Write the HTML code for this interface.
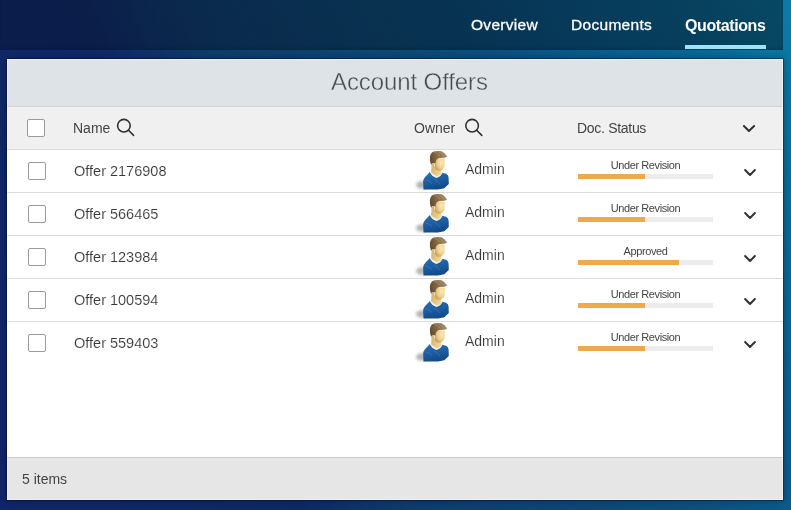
<!DOCTYPE html>
<html><head><meta charset="utf-8">
<style>
*{margin:0;padding:0;box-sizing:border-box}
html,body{width:791px;height:510px;overflow:hidden}
body{position:relative;font-family:"Liberation Sans",sans-serif;
background:linear-gradient(66deg,#10266a 0%,#0f2a68 30%,#0e3c6e 40%,#0c4a78 60%,#0b5282 70%,#0a5e90 80%,#0a6a98 90%,#0a7ca8 100%);}
.hdr{position:absolute;left:0;top:0;width:783px;height:50px;background:linear-gradient(to right,rgba(0,0,0,0.28),rgba(0,4,8,0.42));box-shadow:inset 0 -3px 3px -1px rgba(0,0,0,0.12)}
.nav{position:absolute;top:14.5px;font-size:15.5px;color:#fff;line-height:20px;white-space:nowrap;-webkit-text-stroke:0.3px #fff;letter-spacing:0.3px}
.ul{position:absolute;left:685px;top:45px;width:81px;height:4px;background:#9ee2f5}
.panel{position:absolute;left:7px;top:59px;width:776px;height:441px;background:#fff;box-shadow:0 0 0 1px rgba(0,0,30,0.33),0 0 7px 1px rgba(0,0,10,0.3);overflow:hidden}
.title{position:absolute;left:0;top:0;width:776px;height:48px;background:#dde3e6;border-bottom:1px solid #d4d4d4}
.title span{position:absolute;left:324px;top:9px;font-size:24px;color:#4a4a4a;line-height:28px;white-space:nowrap;letter-spacing:-0.1px;-webkit-text-stroke:0.4px #dde3e6}
.colh{position:absolute;left:0;top:48px;width:776px;height:43px;background:#f0f0f0;border-bottom:1px solid #dcdcdc}
.t{position:absolute;font-size:14px;color:#444;line-height:16px;white-space:nowrap}
.cb{position:absolute;width:18px;height:18px;border:1.3px solid #9a9a9a;border-radius:2px;background:#fff}
.row{position:absolute;left:0;width:776px;height:43px;border-bottom:1px solid #dcdcdc}
.bar{position:absolute;left:571px;width:135px;height:5px;background:#ececec}
.bar i{position:absolute;left:0;top:0;height:5px;background:#eda94b}
.st{position:absolute;left:571px;width:135px;text-align:center;font-size:11px;color:#444;line-height:12px;letter-spacing:-0.4px;white-space:nowrap}
.foot{position:absolute;left:0;top:398px;width:776px;height:43px;background:#e6e6e6;border-top:1px solid #c9c9c9}
svg{position:absolute;overflow:visible}
.t,.st,.nav,.title span{will-change:transform}
</style></head><body>
<div class="hdr"></div>
<div class="nav" style="left:471px">Overview</div>
<div class="nav" style="left:571px">Documents</div>
<div class="nav" style="left:685px;top:15.5px;font-size:16px;font-weight:bold;letter-spacing:-0.4px;-webkit-text-stroke:0">Quotations</div>
<div class="ul"></div>

<div class="panel">
  <div class="title"><span>Account Offers</span></div>
  <div class="colh">
    <div class="cb" style="left:20px;top:12px;border-width:1.5px"></div>
    <div class="t" style="left:66px;top:12.5px">Name</div>
    <div class="t" style="left:407px;top:12.5px">Owner</div>
    <div class="t" style="left:570px;top:12.5px;letter-spacing:-0.3px">Doc. Status</div>
  </div>
  <svg width="776" height="441" style="left:0;top:0">
    <g fill="none" stroke="#2f2f2f" stroke-width="1.55">
      <circle cx="116.9" cy="66.7" r="6.3"/><path d="M121.5 71.3 L126.6 76.4" stroke-linecap="round"/>
      <circle cx="465.1" cy="66.7" r="6.3"/><path d="M469.7 71.3 L474.8 76.4" stroke-linecap="round"/>
      <path d="M736.9 67 L742 72 L747.1 67" stroke-width="2" stroke-linecap="round" stroke-linejoin="round"/>
    </g>
  </svg>
  <div class="row" style="top:91px">
    <div class="cb" style="left:21px;top:12px"></div>
    <div class="t" style="left:66.6px;top:12.8px;font-size:14.5px;-webkit-text-stroke:0.12px #fff;color:#383838">Offer 2176908</div>
    <svg class="av" width="38" height="42" viewBox="0 0 38 42" style="left:407px;top:0"><ellipse cx="8" cy="35" rx="6" ry="3.8" fill="#777" opacity="0.55" filter="url(#bl)"/>
      <path d="M17.7 15 L26.7 19.7 L28 23.5 L23.1 27 L17 22.6Z" fill="url(#neck)"/>
      <path d="M15.9 21.9 Q18.5 26.5 22.6 27.8 Q26.5 26.5 28 22.8 L32.1 23.7 Q34.4 25 34.6 27.5 L34.8 34.1 L30.3 38.2 L24 39.6 L9.5 39.6 L9.1 31.4 Q9.8 28.3 11.6 26.6Z" fill="url(#shirt)"/>
      <path d="M16.4 21.8 Q18.5 26.6 22.6 27.1 Q26.6 26.4 28 22.6" fill="none" stroke="#f3efe2" stroke-width="1.1"/>
      <path d="M21 18.3 Q22.5 20.8 25 20.8 Q28.8 20.5 30.5 16.5 L30.8 8.8 L23.1 7.9 Q20.3 12 21 18.3Z" fill="url(#face)"/>
      <path d="M17 14.8 L16 11 L15.9 7 Q16.5 3 19.8 1.6 Q23.5 0.5 27.5 1.3 Q30.5 2.6 33.2 6.4 L30.6 7.8 L25 8.1 Q22.6 8.8 22 10.5 L21.4 13.4 L19.4 13.2Z" fill="url(#hair)"/><path d="M20 2.2 Q24 3.5 26 6 M23.5 1.4 Q28 3 29.5 6" fill="none" stroke="#b9a27c" stroke-width="0.7" opacity="0.7"/><ellipse cx="19" cy="15.3" rx="1.5" ry="2.2" fill="#e6c483"/><path d="M19.5 13.6 Q18.6 15.2 19.6 17" fill="none" stroke="#b88f55" stroke-width="0.6"/><path d="M11 29.5 Q15 30.5 18 33.5 M20 29 Q24 31 26 34" fill="none" stroke="#5d94c8" stroke-width="0.6" opacity="0.6"/></svg>
    <div class="t" style="left:458px;top:11px;-webkit-text-stroke:0.12px #fff;color:#383838">Admin</div>
    <div class="st" style="top:9px">Under Revision</div>
    <div class="bar" style="top:24px"><i style="width:67px"></i></div>
    <svg width="20" height="20" style="left:0;top:0"><path d="M738.1 20 L743 25 L747.9 20" fill="none" stroke="#333" stroke-width="2" stroke-linecap="round" stroke-linejoin="round"/></svg>
  </div>
  <div class="row" style="top:134px">
    <div class="cb" style="left:21px;top:12px"></div>
    <div class="t" style="left:66.6px;top:12.8px;font-size:14.5px;-webkit-text-stroke:0.12px #fff;color:#383838">Offer 566465</div>
    <svg class="av" width="38" height="42" viewBox="0 0 38 42" style="left:407px;top:0"><ellipse cx="8" cy="35" rx="6" ry="3.8" fill="#777" opacity="0.55" filter="url(#bl)"/>
      <path d="M17.7 15 L26.7 19.7 L28 23.5 L23.1 27 L17 22.6Z" fill="url(#neck)"/>
      <path d="M15.9 21.9 Q18.5 26.5 22.6 27.8 Q26.5 26.5 28 22.8 L32.1 23.7 Q34.4 25 34.6 27.5 L34.8 34.1 L30.3 38.2 L24 39.6 L9.5 39.6 L9.1 31.4 Q9.8 28.3 11.6 26.6Z" fill="url(#shirt)"/>
      <path d="M16.4 21.8 Q18.5 26.6 22.6 27.1 Q26.6 26.4 28 22.6" fill="none" stroke="#f3efe2" stroke-width="1.1"/>
      <path d="M21 18.3 Q22.5 20.8 25 20.8 Q28.8 20.5 30.5 16.5 L30.8 8.8 L23.1 7.9 Q20.3 12 21 18.3Z" fill="url(#face)"/>
      <path d="M17 14.8 L16 11 L15.9 7 Q16.5 3 19.8 1.6 Q23.5 0.5 27.5 1.3 Q30.5 2.6 33.2 6.4 L30.6 7.8 L25 8.1 Q22.6 8.8 22 10.5 L21.4 13.4 L19.4 13.2Z" fill="url(#hair)"/><path d="M20 2.2 Q24 3.5 26 6 M23.5 1.4 Q28 3 29.5 6" fill="none" stroke="#b9a27c" stroke-width="0.7" opacity="0.7"/><ellipse cx="19" cy="15.3" rx="1.5" ry="2.2" fill="#e6c483"/><path d="M19.5 13.6 Q18.6 15.2 19.6 17" fill="none" stroke="#b88f55" stroke-width="0.6"/><path d="M11 29.5 Q15 30.5 18 33.5 M20 29 Q24 31 26 34" fill="none" stroke="#5d94c8" stroke-width="0.6" opacity="0.6"/></svg>
    <div class="t" style="left:458px;top:11px;-webkit-text-stroke:0.12px #fff;color:#383838">Admin</div>
    <div class="st" style="top:9px">Under Revision</div>
    <div class="bar" style="top:24px"><i style="width:67px"></i></div>
    <svg width="20" height="20" style="left:0;top:0"><path d="M738.1 20 L743 25 L747.9 20" fill="none" stroke="#333" stroke-width="2" stroke-linecap="round" stroke-linejoin="round"/></svg>
  </div>
  <div class="row" style="top:177px">
    <div class="cb" style="left:21px;top:12px"></div>
    <div class="t" style="left:66.6px;top:12.8px;font-size:14.5px;-webkit-text-stroke:0.12px #fff;color:#383838">Offer 123984</div>
    <svg class="av" width="38" height="42" viewBox="0 0 38 42" style="left:407px;top:0"><ellipse cx="8" cy="35" rx="6" ry="3.8" fill="#777" opacity="0.55" filter="url(#bl)"/>
      <path d="M17.7 15 L26.7 19.7 L28 23.5 L23.1 27 L17 22.6Z" fill="url(#neck)"/>
      <path d="M15.9 21.9 Q18.5 26.5 22.6 27.8 Q26.5 26.5 28 22.8 L32.1 23.7 Q34.4 25 34.6 27.5 L34.8 34.1 L30.3 38.2 L24 39.6 L9.5 39.6 L9.1 31.4 Q9.8 28.3 11.6 26.6Z" fill="url(#shirt)"/>
      <path d="M16.4 21.8 Q18.5 26.6 22.6 27.1 Q26.6 26.4 28 22.6" fill="none" stroke="#f3efe2" stroke-width="1.1"/>
      <path d="M21 18.3 Q22.5 20.8 25 20.8 Q28.8 20.5 30.5 16.5 L30.8 8.8 L23.1 7.9 Q20.3 12 21 18.3Z" fill="url(#face)"/>
      <path d="M17 14.8 L16 11 L15.9 7 Q16.5 3 19.8 1.6 Q23.5 0.5 27.5 1.3 Q30.5 2.6 33.2 6.4 L30.6 7.8 L25 8.1 Q22.6 8.8 22 10.5 L21.4 13.4 L19.4 13.2Z" fill="url(#hair)"/><path d="M20 2.2 Q24 3.5 26 6 M23.5 1.4 Q28 3 29.5 6" fill="none" stroke="#b9a27c" stroke-width="0.7" opacity="0.7"/><ellipse cx="19" cy="15.3" rx="1.5" ry="2.2" fill="#e6c483"/><path d="M19.5 13.6 Q18.6 15.2 19.6 17" fill="none" stroke="#b88f55" stroke-width="0.6"/><path d="M11 29.5 Q15 30.5 18 33.5 M20 29 Q24 31 26 34" fill="none" stroke="#5d94c8" stroke-width="0.6" opacity="0.6"/></svg>
    <div class="t" style="left:458px;top:11px;-webkit-text-stroke:0.12px #fff;color:#383838">Admin</div>
    <div class="st" style="top:9px">Approved</div>
    <div class="bar" style="top:24px"><i style="width:101px"></i></div>
    <svg width="20" height="20" style="left:0;top:0"><path d="M738.1 20 L743 25 L747.9 20" fill="none" stroke="#333" stroke-width="2" stroke-linecap="round" stroke-linejoin="round"/></svg>
  </div>
  <div class="row" style="top:220px">
    <div class="cb" style="left:21px;top:12px"></div>
    <div class="t" style="left:66.6px;top:12.8px;font-size:14.5px;-webkit-text-stroke:0.12px #fff;color:#383838">Offer 100594</div>
    <svg class="av" width="38" height="42" viewBox="0 0 38 42" style="left:407px;top:0"><ellipse cx="8" cy="35" rx="6" ry="3.8" fill="#777" opacity="0.55" filter="url(#bl)"/>
      <path d="M17.7 15 L26.7 19.7 L28 23.5 L23.1 27 L17 22.6Z" fill="url(#neck)"/>
      <path d="M15.9 21.9 Q18.5 26.5 22.6 27.8 Q26.5 26.5 28 22.8 L32.1 23.7 Q34.4 25 34.6 27.5 L34.8 34.1 L30.3 38.2 L24 39.6 L9.5 39.6 L9.1 31.4 Q9.8 28.3 11.6 26.6Z" fill="url(#shirt)"/>
      <path d="M16.4 21.8 Q18.5 26.6 22.6 27.1 Q26.6 26.4 28 22.6" fill="none" stroke="#f3efe2" stroke-width="1.1"/>
      <path d="M21 18.3 Q22.5 20.8 25 20.8 Q28.8 20.5 30.5 16.5 L30.8 8.8 L23.1 7.9 Q20.3 12 21 18.3Z" fill="url(#face)"/>
      <path d="M17 14.8 L16 11 L15.9 7 Q16.5 3 19.8 1.6 Q23.5 0.5 27.5 1.3 Q30.5 2.6 33.2 6.4 L30.6 7.8 L25 8.1 Q22.6 8.8 22 10.5 L21.4 13.4 L19.4 13.2Z" fill="url(#hair)"/><path d="M20 2.2 Q24 3.5 26 6 M23.5 1.4 Q28 3 29.5 6" fill="none" stroke="#b9a27c" stroke-width="0.7" opacity="0.7"/><ellipse cx="19" cy="15.3" rx="1.5" ry="2.2" fill="#e6c483"/><path d="M19.5 13.6 Q18.6 15.2 19.6 17" fill="none" stroke="#b88f55" stroke-width="0.6"/><path d="M11 29.5 Q15 30.5 18 33.5 M20 29 Q24 31 26 34" fill="none" stroke="#5d94c8" stroke-width="0.6" opacity="0.6"/></svg>
    <div class="t" style="left:458px;top:11px;-webkit-text-stroke:0.12px #fff;color:#383838">Admin</div>
    <div class="st" style="top:9px">Under Revision</div>
    <div class="bar" style="top:24px"><i style="width:67px"></i></div>
    <svg width="20" height="20" style="left:0;top:0"><path d="M738.1 20 L743 25 L747.9 20" fill="none" stroke="#333" stroke-width="2" stroke-linecap="round" stroke-linejoin="round"/></svg>
  </div>
  <div class="row" style="top:263px;border-bottom:0">
    <div class="cb" style="left:21px;top:12px"></div>
    <div class="t" style="left:66.6px;top:12.8px;font-size:14.5px;-webkit-text-stroke:0.12px #fff;color:#383838">Offer 559403</div>
    <svg class="av" width="38" height="42" viewBox="0 0 38 42" style="left:407px;top:0"><ellipse cx="8" cy="35" rx="6" ry="3.8" fill="#777" opacity="0.55" filter="url(#bl)"/>
      <path d="M17.7 15 L26.7 19.7 L28 23.5 L23.1 27 L17 22.6Z" fill="url(#neck)"/>
      <path d="M15.9 21.9 Q18.5 26.5 22.6 27.8 Q26.5 26.5 28 22.8 L32.1 23.7 Q34.4 25 34.6 27.5 L34.8 34.1 L30.3 38.2 L24 39.6 L9.5 39.6 L9.1 31.4 Q9.8 28.3 11.6 26.6Z" fill="url(#shirt)"/>
      <path d="M16.4 21.8 Q18.5 26.6 22.6 27.1 Q26.6 26.4 28 22.6" fill="none" stroke="#f3efe2" stroke-width="1.1"/>
      <path d="M21 18.3 Q22.5 20.8 25 20.8 Q28.8 20.5 30.5 16.5 L30.8 8.8 L23.1 7.9 Q20.3 12 21 18.3Z" fill="url(#face)"/>
      <path d="M17 14.8 L16 11 L15.9 7 Q16.5 3 19.8 1.6 Q23.5 0.5 27.5 1.3 Q30.5 2.6 33.2 6.4 L30.6 7.8 L25 8.1 Q22.6 8.8 22 10.5 L21.4 13.4 L19.4 13.2Z" fill="url(#hair)"/><path d="M20 2.2 Q24 3.5 26 6 M23.5 1.4 Q28 3 29.5 6" fill="none" stroke="#b9a27c" stroke-width="0.7" opacity="0.7"/><ellipse cx="19" cy="15.3" rx="1.5" ry="2.2" fill="#e6c483"/><path d="M19.5 13.6 Q18.6 15.2 19.6 17" fill="none" stroke="#b88f55" stroke-width="0.6"/><path d="M11 29.5 Q15 30.5 18 33.5 M20 29 Q24 31 26 34" fill="none" stroke="#5d94c8" stroke-width="0.6" opacity="0.6"/></svg>
    <div class="t" style="left:458px;top:11px;-webkit-text-stroke:0.12px #fff;color:#383838">Admin</div>
    <div class="st" style="top:9px">Under Revision</div>
    <div class="bar" style="top:24px"><i style="width:67px"></i></div>
    <svg width="20" height="20" style="left:0;top:0"><path d="M738.1 20 L743 25 L747.9 20" fill="none" stroke="#333" stroke-width="2" stroke-linecap="round" stroke-linejoin="round"/></svg>
  </div>
  <div class="foot"><div class="t" style="left:15px;top:13px">5 items</div></div>
  <div style="position:absolute;left:0;top:0;width:776px;height:441px;border:1px solid rgba(255,255,255,0.45)"></div>
</div>
<svg width="0" height="0" style="position:absolute">
  <defs>
    <linearGradient id="sh" x1="1" y1="0.3" x2="0" y2="0.7"><stop offset="0" stop-color="#222" stop-opacity="0.8"/><stop offset="1" stop-color="#888" stop-opacity="0"/></linearGradient><linearGradient id="shirt" x1="0" y1="0" x2="0.3" y2="1"><stop offset="0" stop-color="#2b70b2"/><stop offset="0.55" stop-color="#1d5ea2"/><stop offset="1" stop-color="#134a8a"/></linearGradient><radialGradient id="face" cx="0.7" cy="0.35" r="0.75"><stop offset="0" stop-color="#fbe8b4"/><stop offset="0.55" stop-color="#efd292"/><stop offset="1" stop-color="#c99f5e"/></radialGradient><linearGradient id="neck" x1="0" y1="0" x2="1" y2="0.6"><stop offset="0" stop-color="#d2aa68"/><stop offset="1" stop-color="#f2dc9e"/></linearGradient><linearGradient id="hair" x1="0" y1="0.2" x2="1" y2="0"><stop offset="0" stop-color="#6a5030"/><stop offset="0.45" stop-color="#8b6f4a"/><stop offset="1" stop-color="#a89070"/></linearGradient><filter id="bl" x="-50%" y="-50%" width="200%" height="200%"><feGaussianBlur stdDeviation="1.4"/></filter>
  </defs>
</svg>
</body></html>
